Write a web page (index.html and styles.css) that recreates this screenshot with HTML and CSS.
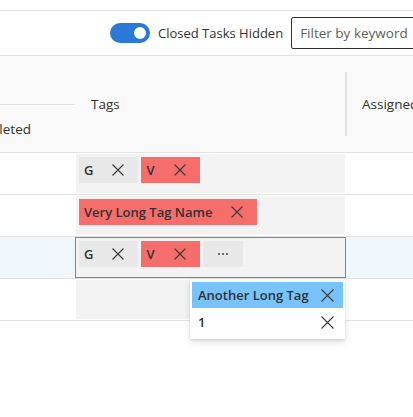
FILE: index.html
```html
<!DOCTYPE html>
<html lang="en">
<head>
<meta charset="utf-8">
<title>Tasks</title>
<link rel="stylesheet" href="styles.css">
</head>
<body>
<div class="page">
  <div class="toolbar">
    <div class="toggle" role="switch" aria-checked="true"><span class="knob"></span></div>
    <span class="toggle-label">Closed Tasks Hidden</span>
    <input class="filter" type="text" placeholder="Filter by keyword">
  </div>

  <div class="header">
    <div class="h-completed">
      <div class="h-group"></div>
      <div class="h-sub"><span>Completed</span></div>
    </div>
    <div class="h-tags">Tags</div>
    <div class="h-assigned">
      <span class="divider"></span>
      <span class="h-assigned-label">Assigned To</span>
    </div>
  </div>

  <div class="row">
    <div class="c-completed"></div>
    <div class="c-tags">
      <div class="tag-cell">
        <div class="tag"><span class="tag-text">G</span><span class="tag-close"><svg width="12" height="12" viewBox="0 0 12 12"><path d="M0.5 0.5L11.5 11.5M11.5 0.5L0.5 11.5"/></svg></span></div>
        <div class="tag red"><span class="tag-text">V</span><span class="tag-close"><svg width="12" height="12" viewBox="0 0 12 12"><path d="M0.5 0.5L11.5 11.5M11.5 0.5L0.5 11.5"/></svg></span></div>
      </div>
    </div>
    <div class="c-assigned"></div>
  </div>

  <div class="row">
    <div class="c-completed"></div>
    <div class="c-tags">
      <div class="tag-cell">
        <div class="tag red"><span class="tag-text">Very Long Tag Name</span><span class="tag-close"><svg width="12" height="12" viewBox="0 0 12 12"><path d="M0.5 0.5L11.5 11.5M11.5 0.5L0.5 11.5"/></svg></span></div>
      </div>
    </div>
    <div class="c-assigned"></div>
  </div>

  <div class="row selected">
    <div class="c-completed"></div>
    <div class="c-tags">
      <div class="tag-cell">
        <div class="tag"><span class="tag-text">G</span><span class="tag-close"><svg width="12" height="12" viewBox="0 0 12 12"><path d="M0.5 0.5L11.5 11.5M11.5 0.5L0.5 11.5"/></svg></span></div>
        <div class="tag red"><span class="tag-text">V</span><span class="tag-close"><svg width="12" height="12" viewBox="0 0 12 12"><path d="M0.5 0.5L11.5 11.5M11.5 0.5L0.5 11.5"/></svg></span></div>
        <div class="more"><svg width="12" height="4" viewBox="0 0 12 4"><circle cx="2" cy="2" r="0.9"/><circle cx="6" cy="2" r="0.9"/><circle cx="10" cy="2" r="0.9"/></svg></div>
        <div class="overflow-menu">
          <div class="menu-item active"><span class="menu-text">Another Long Tag</span><span class="menu-close"><svg width="13" height="13" viewBox="0 0 13 13"><path d="M0.5 0.5L12.5 12.5M12.5 0.5L0.5 12.5"/></svg></span></div>
          <div class="menu-item tall"><span class="menu-text">1</span><span class="menu-close"><svg width="13" height="13" viewBox="0 0 13 13"><path d="M0.5 0.5L12.5 12.5M12.5 0.5L0.5 12.5"/></svg></span></div>
        </div>
      </div>
    </div>
    <div class="c-assigned"></div>
  </div>

  <div class="row">
    <div class="c-completed"></div>
    <div class="c-tags">
      <div class="tag-cell"></div>
    </div>
    <div class="c-assigned"></div>
  </div>
</div>
</body>
</html>
```

FILE: styles.css
```css
html {
  overflow: hidden;
}

body {
  margin: 0;
  min-height: 417px;
  font-family: "Segoe UI", "Open Sans", "Noto Sans", sans-serif;
  font-size: 13px;
  color: #323130;
  background: #ffffff;
}

.page {
  width: 560px;
  padding-top: 10px;
}

/* toolbar */
.toolbar {
  display: flex;
  align-items: center;
  height: 44px;
  padding-left: 110px;
  border-top: 1px solid #e1e1e1;
  border-bottom: 1px solid #e1e1e1;
}

.toggle {
  width: 40px;
  height: 20px;
  box-sizing: border-box;
  border-radius: 10px;
  background: #2a79d6;
  display: flex;
  align-items: center;
  justify-content: flex-end;
  padding-right: 4px;
  flex: none;
}

.knob {
  width: 12px;
  height: 12px;
  border-radius: 50%;
  background: #ffffff;
}

.toggle-label {
  margin-left: 8px;
  white-space: nowrap;
}

.filter {
  margin-left: 8px;
  width: 150px;
  height: 32px;
  box-sizing: border-box;
  border: 1px solid #323130;
  border-radius: 2px;
  padding: 0 8px;
  font: inherit;
  font-size: 13.5px;
  color: #323130;
  background: #ffffff;
  outline: none;
}

.filter::placeholder {
  color: #605e5c;
}

/* header */
.header {
  display: flex;
  height: 97px;
  box-sizing: border-box;
  background: #f9f9f9;
  border-bottom: 1px solid #e1e1e1;
}

.h-completed {
  width: 75px;
  display: flex;
  flex-direction: column;
  flex: none;
}

.h-group {
  height: 49px;
  box-sizing: border-box;
  border-bottom: 1px solid #e1e1e1;
}

.h-sub {
  flex: 1;
  display: flex;
  align-items: center;
  justify-content: flex-end;
  padding-right: 44px;
  overflow: hidden;
  white-space: nowrap;
  font-size: 13.5px;
}

.h-tags {
  width: 270px;
  box-sizing: border-box;
  padding-left: 16px;
  display: flex;
  align-items: center;
  flex: none;
  font-size: 13.5px;
}

.h-assigned {
  display: flex;
  align-items: center;
  flex: none;
  width: 68px;
  overflow: hidden;
  font-size: 13.5px;
}

.divider {
  width: 2px;
  height: 64px;
  background: #e1e1e1;
  flex: none;
}

.h-assigned-label {
  margin-left: 15px;
  white-space: nowrap;
}

/* rows */
.row {
  display: flex;
  height: 42px;
  box-sizing: border-box;
  border-bottom: 1px solid #e1e1e1;
}

.row.selected {
  background: #eff6fc;
}

.c-completed {
  width: 75px;
  flex: none;
}

.c-tags {
  width: 271px;
  flex: none;
  box-sizing: border-box;
  padding: 1px;
}

.c-assigned {
  flex: 1;
}

.tag-cell {
  height: 100%;
  box-sizing: border-box;
  background: #f3f3f3;
  padding: 3px;
  display: flex;
  align-items: flex-start;
  gap: 3px;
  position: relative;
}

.row.selected .c-tags {
  padding: 0;
}

.row.selected .tag-cell {
  border: 1px solid #3e95e6;
}

.tag {
  display: flex;
  align-items: center;
  height: 26px;
  background: #e8e8e8;
  font-weight: 600;
  white-space: nowrap;
}

.tag.red {
  background: #f56e6c;
}

.tag-text {
  padding: 0 5px;
}

.tag-close {
  width: 40px;
  height: 26px;
  display: flex;
  align-items: center;
  justify-content: center;
}

.tag-close svg path,
.menu-close svg path {
  stroke: #3b3a39;
  stroke-width: 1.1;
  fill: none;
}

.more {
  width: 40px;
  height: 26px;
  background: #e8e8e8;
  display: flex;
  align-items: center;
  justify-content: center;
}

.more svg circle {
  fill: #323130;
}

/* overflow popup */
.overflow-menu {
  position: absolute;
  left: 114px;
  top: 42px;
  width: 155px;
  box-sizing: border-box;
  padding: 2px 2px 3px 2px;
  background: #ffffff;
  box-shadow: 0 3px 7px rgba(0, 0, 0, 0.13), 0 0.6px 1.8px rgba(0, 0, 0, 0.11);
  z-index: 2;
}

.menu-item {
  display: flex;
  align-items: center;
  justify-content: space-between;
  height: 26px;
  padding-left: 6px;
  font-weight: 600;
  white-space: nowrap;
}

.menu-item.tall {
  height: 28px;
}

.menu-item.active {
  background: #78c3fb;
}

.menu-close {
  width: 32px;
  display: flex;
  align-items: center;
  justify-content: center;
}
```
